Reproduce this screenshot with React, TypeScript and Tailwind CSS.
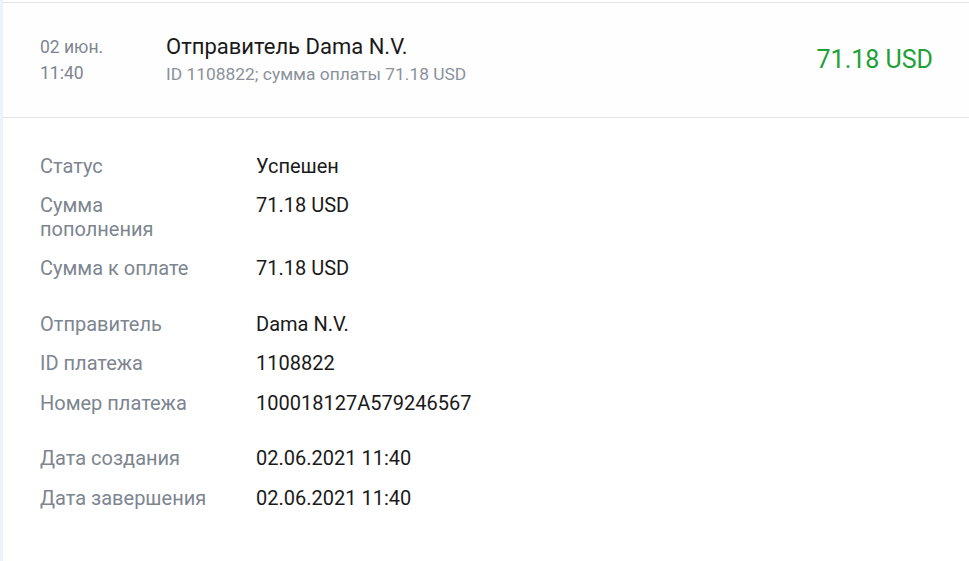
import React from "react";

const groups: { label: string; value: string }[][] = [
  [
    { label: "Статус", value: "Успешен" },
    { label: "Сумма пополнения", value: "71.18 USD" },
    { label: "Сумма к оплате", value: "71.18 USD" },
  ],
  [
    { label: "Отправитель", value: "Dama N.V." },
    { label: "ID платежа", value: "1108822" },
    { label: "Номер платежа", value: "100018127A579246567" },
  ],
  [
    { label: "Дата создания", value: "02.06.2021 11:40" },
    { label: "Дата завершения", value: "02.06.2021 11:40" },
  ],
];

export default function App() {
  return (
    <div
      className="w-[969px] h-[561px] bg-[#edf2f8] pl-[3px] overflow-hidden"
      style={{ fontFamily: "Roboto, 'Noto Sans', sans-serif" }}
    >
      <div className="h-full bg-white pt-[2px]">
        <div className="h-full border-t border-[#e3e5e8] bg-white">
          <div className="flex items-center h-[115px] border-b border-[#e3e5e8] bg-[#fefefe] pl-[37px] pr-[36px]">
            <div className="w-[126px] shrink-0 text-[17.5px] leading-[26px] text-[#7d8590]">
              <div>02 июн.</div>
              <div>11:40</div>
            </div>
            <div className="flex-1">
              <div className="text-[22px] leading-[28px] text-[#1a1a1a]">Отправитель Dama N.V.</div>
              <div className="text-[17.4px] leading-[26px] text-[#8a929c]">ID 1108822; сумма оплаты 71.18 USD</div>
            </div>
            <div className="text-[25px] leading-[30px] text-[#21a038]">71.18 USD</div>
          </div>
          <div className="pl-[37px] pt-[28.75px] flex flex-col gap-[16px]">
            {groups.map((g, i) => (
              <div key={i} className="flex flex-col">
                {g.map((r) => (
                  <div key={r.label} className="flex py-[8px] text-[20px] leading-[23.5px]">
                    <div className="w-[216px] shrink-0 pr-[44px] text-[#7d8590]">{r.label}</div>
                    <div className="text-[#1a1a1a]">{r.value}</div>
                  </div>
                ))}
              </div>
            ))}
          </div>
        </div>
      </div>
    </div>
  );
}
